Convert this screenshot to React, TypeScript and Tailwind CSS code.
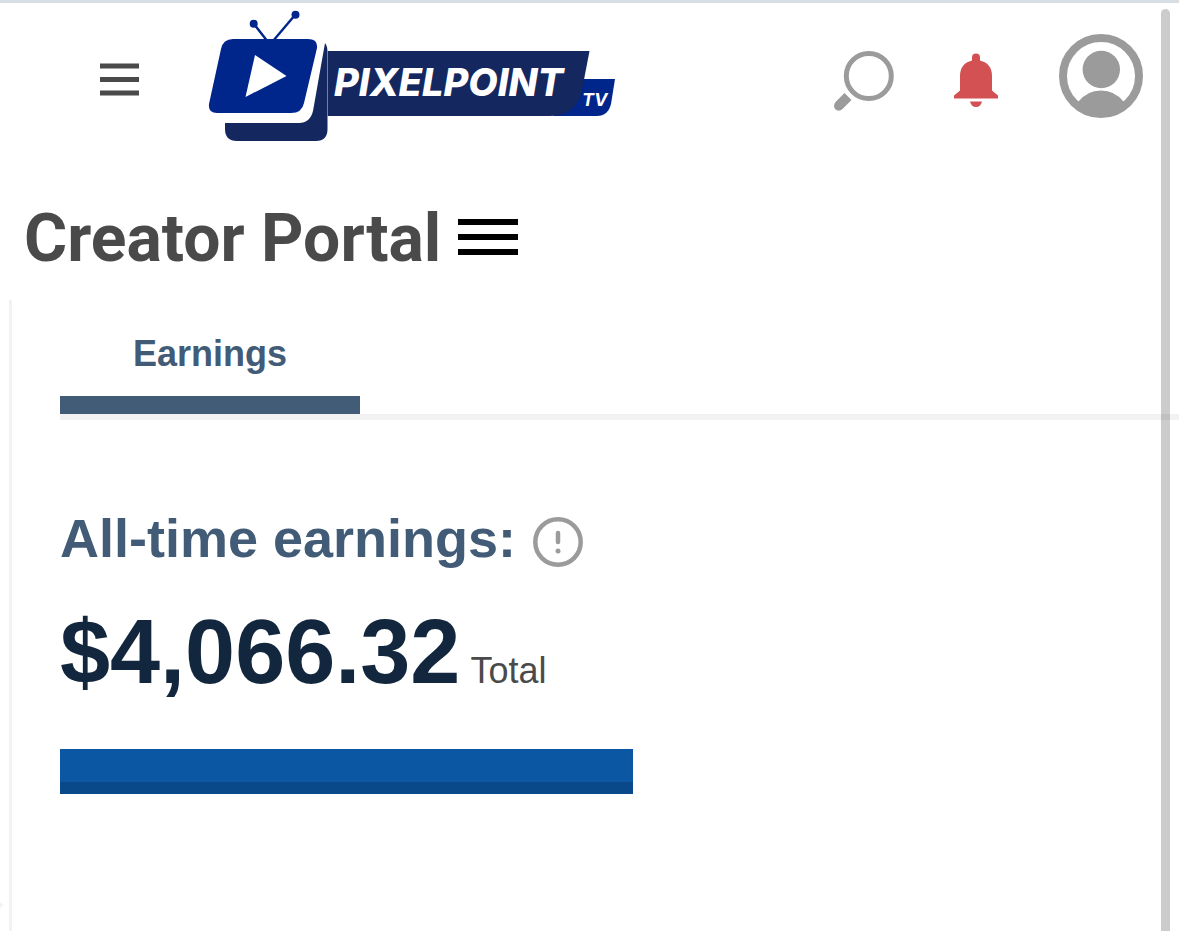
import React from 'react';

function Logo() {
  return (
    <svg width="408" height="132" viewBox="0 0 408 132" role="img" aria-label="Pixelpoint TV">
      {/* Antenna */}
      <path d="M46 14L60 32M87 5L65 31" stroke="#00258b" strokeWidth="2.4" />
      <circle cx="45.700" cy="13.700" r="4" fill="#00258b" />
      <circle cx="87.500" cy="4.700" r="4" fill="#00258b" />

      {/* Name band */}
      <path d="M370 69H407L403 94Q400 106 389 106H345Z" fill="#00258b" />
      <path d="M119.500 41H381.500L374 80Q368 106 342 106H119.500Z" fill="#14285f" />

      {/* Set */}
      <path
        d="M117 33Q119.500 36 119.500 42V119Q119.500 131 108 131H29Q17 131 17 119V113H91Q102 113 105 101Z"
        fill="#14285f"
      />
      <path d="M119.500 41V106" stroke="#8f99b5" strokeWidth="0.6" />
      <path
        d="M25 29H100Q110 29 109 38L96 93Q94 103 83 103H9Q0 103 1 94L13 39Q15 29 25 29Z"
        fill="#00258b"
      />
      <path d="M47 45L78.500 66L37.500 87Z" fill="#fff" />

      <g fill="#fff" fontFamily="Inter, sans-serif" fontStyle="italic">
        <text x="126" y="86" fontSize="38" fontWeight="800">PIXELPOINT</text>
        <text x="374" y="96" fontSize="18" fontWeight="700">TV</text>
      </g>
    </svg>
  );
}

function SearchIcon() {
  return (
    <svg width="60" height="70" viewBox="0 0 60 70" fill="none" stroke="#9b9b9b" className="overflow-visible">
      <circle cx="35.800" cy="35" r="22.500" strokeWidth="5" />
      <path d="M11.500 52L18.500 59L9.500 68Q6 71 2.500 68.500Q-0.500 65 2.500 61Z" fill="#9b9b9b" stroke="none" />
    </svg>
  );
}

function BellIcon() {
  return (
    <svg width="44" height="62" viewBox="0 0 44 62" fill="#d35152">
      <path d="M22 8.500Q18 8.500 18 12.500V15.500Q6 18.500 6 31V45.500L0 50.500V53.500H44V50.500L38 45.500V31Q38 18.500 26 15.500V12.500Q26 8.500 22 8.500Z" />
      <path d="M16 56.500H28Q26.500 62 22 62Q17.500 62 16 56.500Z" />
    </svg>
  );
}

function AvatarIcon() {
  return (
    <svg width="84" height="84" viewBox="0 0 84 84">
      <circle cx="42" cy="42" r="38" fill="#fff" stroke="#9b9b9b" strokeWidth="8" />
      <circle cx="42.300" cy="35.500" r="18.700" fill="#9b9b9b" />
      <path d="M19 68Q28 56.500 42 56.500Q56 56.500 65 68Q56 80 42 80Q28 80 19 68Z" fill="#9b9b9b" />
    </svg>
  );
}

export default function App() {
  return (
    <div className="relative flex min-h-screen flex-col overflow-hidden border-t-3 border-[#d8dfe4] bg-white font-['Liberation_Sans',Arial,sans-serif]">
      <header className="flex items-center pt-[7px] pr-9 pl-25">
        <button type="button" aria-label="Open menu">
          <svg width="39" height="42" viewBox="0 0 39 42" fill="#4a4a4a">
            <path d="M0 8.500H39V13.500H0ZM0 22H39V27H0ZM0 35.500H39V40.500H0Z" />
          </svg>
        </button>
        <a href="#" className="ml-[69px]">
          <Logo />
        </a>
        <div className="ml-auto flex items-center gap-[61px]">
          <button type="button" aria-label="Search">
            <SearchIcon />
          </button>
          <button type="button" aria-label="Notifications">
            <BellIcon />
          </button>
          <button type="button" aria-label="Account">
            <AvatarIcon />
          </button>
        </div>
      </header>

      <div className="mt-[57px] flex items-center gap-[17px] pl-6">
        <h1 className="font-[Roboto,sans-serif] text-[66px] leading-20 font-bold text-[#4a4a4a]">
          Creator Portal
        </h1>
        <button type="button" aria-label="Portal sections">
          <svg width="60" height="40" viewBox="0 0 60 40">
            <path d="M0 0H60V6H0ZM0 15H60V21H0ZM0 30H60V36H0Z" />
          </svg>
        </button>
      </div>

      <main className="mt-[21px] ml-[9px] flex-1 border-l-3 border-[#f2f2f2] pb-20 pl-12">
        <nav className="border-b-6 border-[#f2f2f2]">
          <button
            type="button"
            className="block w-75 border-b-18 border-[#425b76] pt-[33px] pb-[21px] text-4xl leading-[42px] font-bold text-[#425b76]"
          >
            Earnings
          </button>
        </nav>

        <section>
          <div className="mt-22 flex items-center gap-[17px]">
            <h2 className="text-[54px] leading-15 font-bold text-[#425b76]">All-time earnings:</h2>
            <button type="button" aria-label="About all-time earnings">
              <svg width="50" height="58" viewBox="0 0 50 58" fill="none" stroke="#9b9b9b">
                <circle cx="25" cy="33" r="22.700" strokeWidth="4.500" />
                <path d="M25 24V33" strokeWidth="4.500" strokeLinecap="round" />
                <circle cx="25" cy="42" r="2.500" fill="#9b9b9b" stroke="none" />
              </svg>
            </button>
          </div>
          <p className="mt-[34px] flex items-baseline gap-[10px]">
            <strong className="text-[90px] leading-25 font-bold text-[#12263d]">$4,066.32</strong>
            <span className="text-4xl text-[#4a4a4a]">Total</span>
          </p>
          <div className="mt-[47px] h-[45px] w-[573px] max-w-full border-b-12 border-[#09498a] bg-[#0b57a4]" />
        </section>
      </main>

      {/* Edge of the collapsed side drawer's arrow */}
      <svg className="absolute bottom-[22px] left-0" width="3" height="8" viewBox="0 0 3 8" fill="#f2f2f2">
        <path d="M0 1L3 4L0 7Z" />
      </svg>

      {/* Scroll thumb */}
      <div className="absolute top-[6px] right-[9px] bottom-0 w-[9px] rounded-t-full bg-black/20" />
    </div>
  );
}
